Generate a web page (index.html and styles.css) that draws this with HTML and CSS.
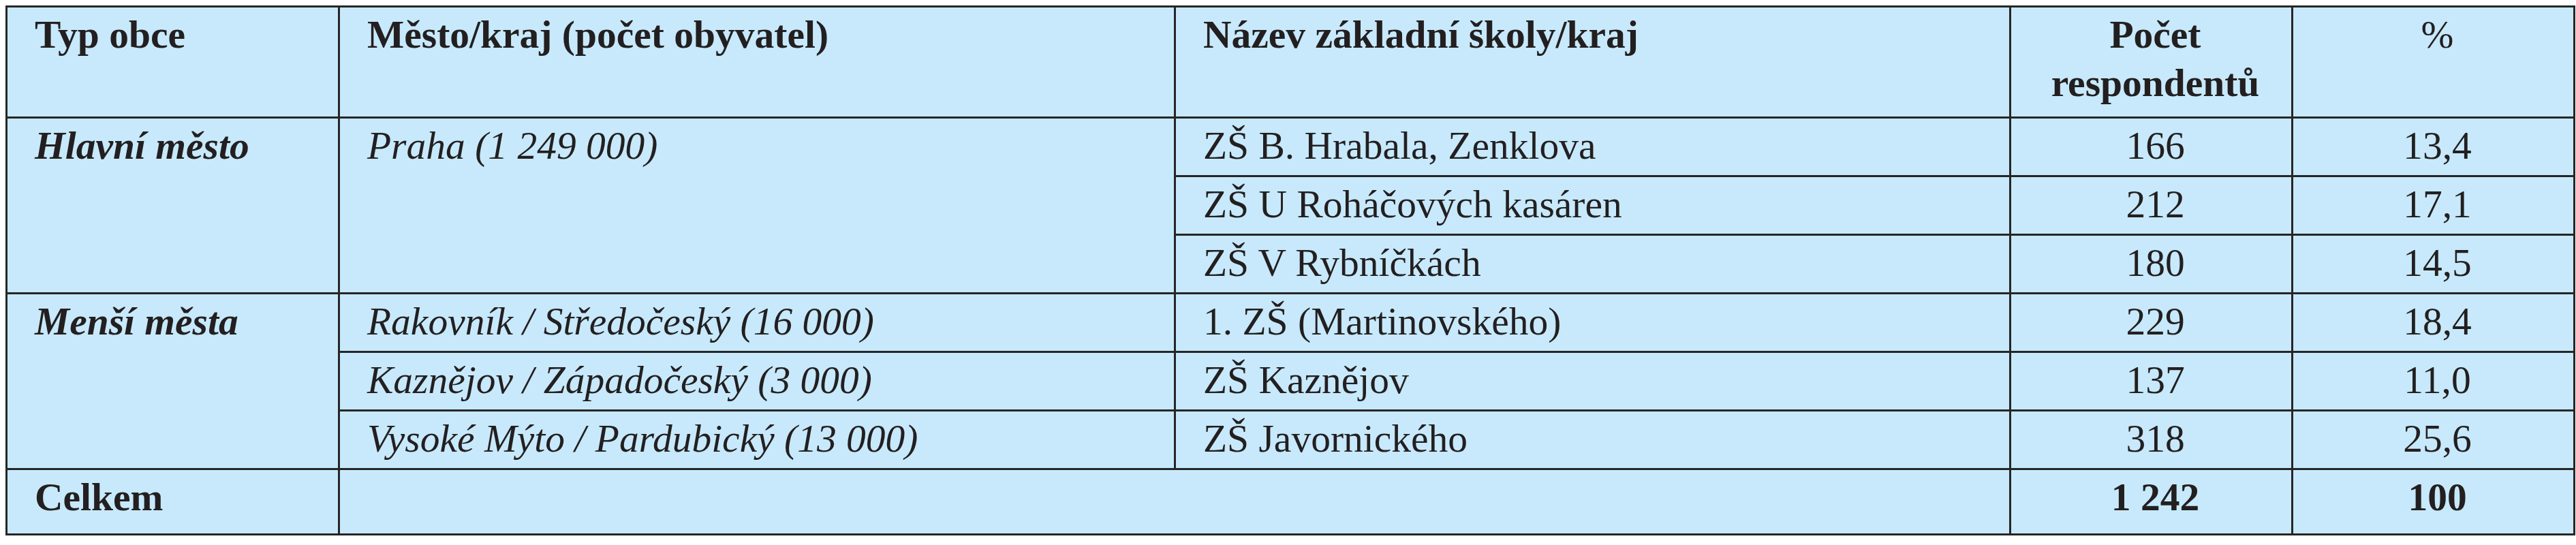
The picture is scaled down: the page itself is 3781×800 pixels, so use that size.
FILE: index.html
```html
<!DOCTYPE html>
<html lang="cs">
<head>
<meta charset="utf-8">
<title>Respondenti podle typu obce</title>
<link rel="stylesheet" href="styles.css">
</head>
<body>
<table class="survey">
  <colgroup>
    <col class="c-type">
    <col class="c-city">
    <col class="c-school">
    <col class="c-count">
    <col class="c-pct">
  </colgroup>
  <thead>
    <tr class="head-row">
      <th>Typ obce</th>
      <th>Město/kraj (počet obyvatel)</th>
      <th>Název základní školy/kraj</th>
      <th class="center">Počet<br>respondentů</th>
      <th class="center light">%</th>
    </tr>
  </thead>
  <tbody>
    <tr class="data-row">
      <td rowspan="3" class="group">Hlavní město</td>
      <td rowspan="3" class="city">Praha (1 249 000)</td>
      <td>ZŠ B. Hrabala, Zenklova</td>
      <td class="center">166</td>
      <td class="center">13,4</td>
    </tr>
    <tr class="data-row">
      <td>ZŠ U Roháčových kasáren</td>
      <td class="center">212</td>
      <td class="center">17,1</td>
    </tr>
    <tr class="data-row">
      <td>ZŠ V Rybníčkách</td>
      <td class="center">180</td>
      <td class="center">14,5</td>
    </tr>
    <tr class="data-row">
      <td rowspan="3" class="group">Menší města</td>
      <td class="city">Rakovník / Středočeský (16 000)</td>
      <td>1. ZŠ (Martinovského)</td>
      <td class="center">229</td>
      <td class="center">18,4</td>
    </tr>
    <tr class="data-row">
      <td class="city">Kaznějov / Západočeský (3 000)</td>
      <td>ZŠ Kaznějov</td>
      <td class="center">137</td>
      <td class="center">11,0</td>
    </tr>
    <tr class="data-row">
      <td class="city">Vysoké Mýto / Pardubický (13 000)</td>
      <td>ZŠ Javornického</td>
      <td class="center">318</td>
      <td class="center">25,6</td>
    </tr>
    <tr class="total-row">
      <td class="strong">Celkem</td>
      <td colspan="2"></td>
      <td class="center strong">1 242</td>
      <td class="center strong">100</td>
    </tr>
  </tbody>
</table>
</body>
</html>
```

FILE: styles.css
```css
html, body {
  background: #ffffff;
}

body {
  margin: 8px 0 0 8px;
  font-family: "Liberation Serif", "Times New Roman", serif;
  color: #231f20;
}

.survey {
  border-collapse: collapse;
  table-layout: fixed;
  width: 3771px;
  background: #c7e9fb;
  font-size: 57.5px;
  line-height: 71px;
}

.c-type { width: 488px; }
.c-city { width: 1227px; }
.c-school { width: 1226px; }
.c-count { width: 414px; }
.c-pct { width: 414px; }

.survey th,
.survey td {
  border: 3px solid #262626;
  padding: 4px 28px 0 40px;
  vertical-align: top;
  text-align: left;
  white-space: nowrap;
}

.survey th {
  font-weight: bold;
}

.head-row { height: 163px; }
.data-row { height: 86px; }
.total-row { height: 96px; }

.survey .center {
  text-align: center;
}

.survey .light {
  font-weight: normal;
}

.group {
  font-weight: bold;
  font-style: italic;
}

.city {
  font-style: italic;
}

.strong {
  font-weight: bold;
}
```
